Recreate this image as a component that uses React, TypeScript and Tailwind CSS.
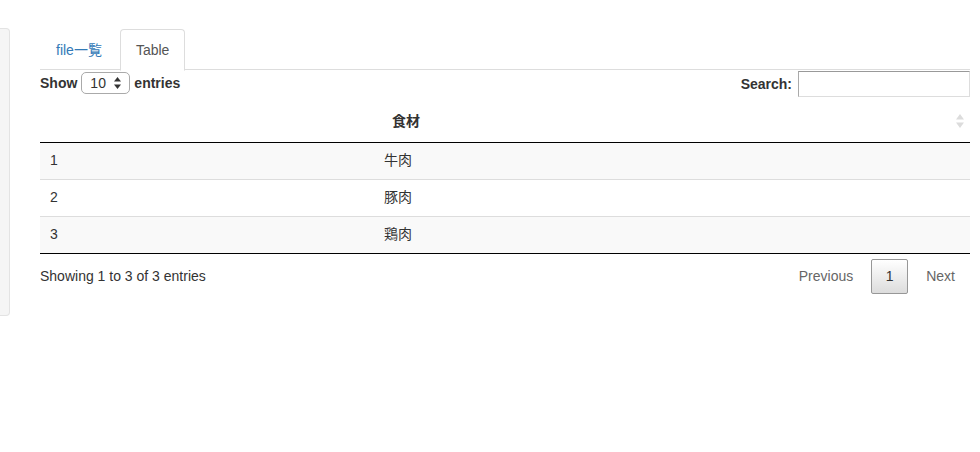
import { useState } from "react";

const rows = [
  { id: 1, name: "牛肉" },
  { id: 2, name: "豚肉" },
  { id: 3, name: "鶏肉" },
];

const font = { fontFamily: '"Liberation Sans", "Noto Sans CJK JP", sans-serif' };

function SortIcon() {
  return (
    <svg width="8" height="14" viewBox="0 0 8 14" className="text-[#dcdcdc]">
      <path d="M4 0 L8 5.5 L0 5.5 Z" fill="currentColor" />
      <path d="M4 14 L8 8.5 L0 8.5 Z" fill="currentColor" />
    </svg>
  );
}

export default function App() {
  const [tab, setTab] = useState("table");

  return (
    <div className="w-[980px] h-[452px] bg-white text-[14px] text-[#333] flex" style={font}>
      {/* sidebar well edge */}
      <div className="mt-[28px] h-[288px] w-[10px] shrink-0 bg-[#f5f5f5] border border-l-0 border-[#e3e3e3] rounded-r-[4px]" />

      <div className="ml-[30px] w-[930px] pt-[29px]">
        {/* tabs */}
        <div className="flex border-b border-[#ddd] h-[41px]">
          <button
            onClick={() => setTab("list")}
            className="px-[15px] h-[41px] leading-[20px] text-[#337ab7] border border-transparent mr-[2px] rounded-t-[4px]"
          >
            file一覧
          </button>
          <button
            onClick={() => setTab("table")}
            className="px-[15px] h-[42px] leading-[20px] text-[#555] bg-white border border-[#ddd] border-b-white rounded-t-[4px]"
          >
            Table
          </button>
        </div>

        {/* controls */}
        <div className="flex justify-between items-start">
          <div className="flex items-center gap-[4px] font-bold pt-[2px]">
            <span>Show</span>
            <span className="flex items-center justify-between w-[49px] h-[22px] px-[8px] border border-[#aaa] rounded-[5px] font-normal bg-white">
              <span>10</span>
              <svg width="7" height="12" viewBox="0 0 7 12">
                <path d="M3.5 0 L7 4.5 L0 4.5 Z" fill="#333" />
                <path d="M3.5 12 L7 7.5 L0 7.5 Z" fill="#333" />
              </svg>
            </span>
            <span>entries</span>
          </div>
          <div className="flex items-center font-bold pt-[1px]">
            <span>Search:</span>
            <input className="ml-[6px] w-[172px] h-[26px] border border-[#ddd] border-t-[#999] border-l-[#aaa] outline-none" />
          </div>
        </div>

        {/* table */}
        <table className="w-full mt-[4px] border-collapse">
          <thead>
            <tr className="border-b border-black">
              <th className="w-[334px] h-[41px]" />
              <th className="pl-[18px] pr-[6px] text-left font-bold">
                <div className="flex items-center justify-between">
                  <span>食材</span>
                  <SortIcon />
                </div>
              </th>
            </tr>
          </thead>
          <tbody>
            {rows.map((r, i) => (
              <tr
                key={r.id}
                className={`${i % 2 === 0 ? "bg-[#f9f9f9]" : "bg-white"} ${i < rows.length - 1 ? "border-b border-[#ddd]" : "border-b border-black"}`}
              >
                <td className="h-[37px] px-[10px]">{r.id}</td>
                <td className="px-[10px]">{r.name}</td>
              </tr>
            ))}
          </tbody>
        </table>

        {/* footer */}
        <div className="flex justify-between items-center pt-[5px]">
          <div className="pt-[1px]">Showing 1 to 3 of 3 entries</div>
          <div className="flex items-center">
            <span className="pr-[18px] text-[#666]">Previous</span>
            <span className="w-[37px] h-[35px] flex items-center justify-center border border-[#979797] rounded-[2px] bg-gradient-to-b from-white to-[#dcdcdc]">
              1
            </span>
            <span className="pl-[18px] pr-[15px] text-[#666]">Next</span>
          </div>
        </div>
      </div>
    </div>
  );
}
